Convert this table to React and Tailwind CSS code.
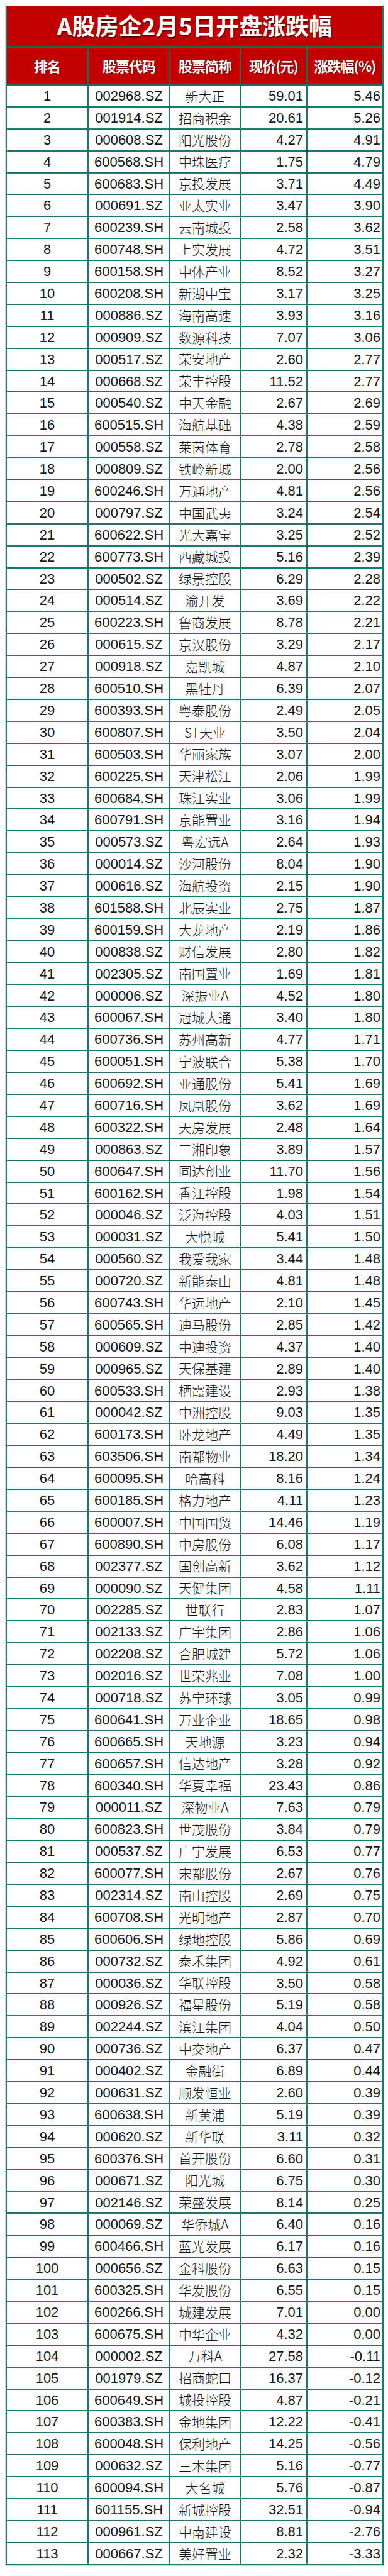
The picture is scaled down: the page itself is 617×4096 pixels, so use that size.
import React from "react";

const RAW = `1|002968.SZ|新大正|59.01|5.46
2|001914.SZ|招商积余|20.61|5.26
3|000608.SZ|阳光股份|4.27|4.91
4|600568.SH|中珠医疗|1.75|4.79
5|600683.SH|京投发展|3.71|4.49
6|000691.SZ|亚太实业|3.47|3.90
7|600239.SH|云南城投|2.58|3.62
8|600748.SH|上实发展|4.72|3.51
9|600158.SH|中体产业|8.52|3.27
10|600208.SH|新湖中宝|3.17|3.25
11|000886.SZ|海南高速|3.93|3.16
12|000909.SZ|数源科技|7.07|3.06
13|000517.SZ|荣安地产|2.60|2.77
14|000668.SZ|荣丰控股|11.52|2.77
15|000540.SZ|中天金融|2.67|2.69
16|600515.SH|海航基础|4.38|2.59
17|000558.SZ|莱茵体育|2.78|2.58
18|000809.SZ|铁岭新城|2.00|2.56
19|600246.SH|万通地产|4.81|2.56
20|000797.SZ|中国武夷|3.24|2.54
21|600622.SH|光大嘉宝|3.25|2.52
22|600773.SH|西藏城投|5.16|2.39
23|000502.SZ|绿景控股|6.29|2.28
24|000514.SZ|渝开发|3.69|2.22
25|600223.SH|鲁商发展|8.78|2.21
26|000615.SZ|京汉股份|3.29|2.17
27|000918.SZ|嘉凯城|4.87|2.10
28|600510.SH|黑牡丹|6.39|2.07
29|600393.SH|粤泰股份|2.49|2.05
30|600807.SH|ST天业|3.50|2.04
31|600503.SH|华丽家族|3.07|2.00
32|600225.SH|天津松江|2.06|1.99
33|600684.SH|珠江实业|3.06|1.99
34|600791.SH|京能置业|3.16|1.94
35|000573.SZ|粤宏远A|2.64|1.93
36|000014.SZ|沙河股份|8.04|1.90
37|000616.SZ|海航投资|2.15|1.90
38|601588.SH|北辰实业|2.75|1.87
39|600159.SH|大龙地产|2.19|1.86
40|000838.SZ|财信发展|2.80|1.82
41|002305.SZ|南国置业|1.69|1.81
42|000006.SZ|深振业A|4.52|1.80
43|600067.SH|冠城大通|3.40|1.80
44|600736.SH|苏州高新|4.77|1.71
45|600051.SH|宁波联合|5.38|1.70
46|600692.SH|亚通股份|5.41|1.69
47|600716.SH|凤凰股份|3.62|1.69
48|600322.SH|天房发展|2.48|1.64
49|000863.SZ|三湘印象|3.89|1.57
50|600647.SH|同达创业|11.70|1.56
51|600162.SH|香江控股|1.98|1.54
52|000046.SZ|泛海控股|4.03|1.51
53|000031.SZ|大悦城|5.41|1.50
54|000560.SZ|我爱我家|3.44|1.48
55|000720.SZ|新能泰山|4.81|1.48
56|600743.SH|华远地产|2.10|1.45
57|600565.SH|迪马股份|2.85|1.42
58|000609.SZ|中迪投资|4.37|1.40
59|000965.SZ|天保基建|2.89|1.40
60|600533.SH|栖霞建设|2.93|1.38
61|000042.SZ|中洲控股|9.03|1.35
62|600173.SH|卧龙地产|4.49|1.35
63|603506.SH|南都物业|18.20|1.34
64|600095.SH|哈高科|8.16|1.24
65|600185.SH|格力地产|4.11|1.23
66|600007.SH|中国国贸|14.46|1.19
67|600890.SH|中房股份|6.08|1.17
68|002377.SZ|国创高新|3.62|1.12
69|000090.SZ|天健集团|4.58|1.11
70|002285.SZ|世联行|2.83|1.07
71|002133.SZ|广宇集团|2.86|1.06
72|002208.SZ|合肥城建|5.72|1.06
73|002016.SZ|世荣兆业|7.08|1.00
74|000718.SZ|苏宁环球|3.05|0.99
75|600641.SH|万业企业|18.65|0.98
76|600665.SH|天地源|3.23|0.94
77|600657.SH|信达地产|3.28|0.92
78|600340.SH|华夏幸福|23.43|0.86
79|000011.SZ|深物业A|7.63|0.79
80|600823.SH|世茂股份|3.84|0.79
81|000537.SZ|广宇发展|6.53|0.77
82|600077.SH|宋都股份|2.67|0.76
83|002314.SZ|南山控股|2.69|0.75
84|600708.SH|光明地产|2.87|0.70
85|600606.SH|绿地控股|5.86|0.69
86|000732.SZ|泰禾集团|4.92|0.61
87|000036.SZ|华联控股|3.50|0.58
88|000926.SZ|福星股份|5.19|0.58
89|002244.SZ|滨江集团|4.04|0.50
90|000736.SZ|中交地产|6.37|0.47
91|000402.SZ|金融街|6.89|0.44
92|000631.SZ|顺发恒业|2.60|0.39
93|600638.SH|新黄浦|5.19|0.39
94|000620.SZ|新华联|3.11|0.32
95|600376.SH|首开股份|6.60|0.31
96|000671.SZ|阳光城|6.75|0.30
97|002146.SZ|荣盛发展|8.14|0.25
98|000069.SZ|华侨城A|6.40|0.16
99|600466.SH|蓝光发展|6.17|0.16
100|000656.SZ|金科股份|6.63|0.15
101|600325.SH|华发股份|6.55|0.15
102|600266.SH|城建发展|7.01|0.00
103|600675.SH|中华企业|4.32|0.00
104|000002.SZ|万科A|27.58|-0.11
105|001979.SZ|招商蛇口|16.37|-0.12
106|600649.SH|城投控股|4.87|-0.21
107|600383.SH|金地集团|12.22|-0.41
108|600048.SH|保利地产|14.25|-0.56
109|000632.SZ|三木集团|5.16|-0.77
110|600094.SH|大名城|5.76|-0.87
111|601155.SH|新城控股|32.51|-0.94
112|000961.SZ|中南建设|8.81|-2.76
113|000667.SZ|美好置业|2.32|-3.33`;

const ROWS = RAW.split("\n").map((l) => l.split("|"));

const GRID = "grid grid-cols-[130px_130px_112px_106px_119px]";
const NUM = "font-['Liberation_Sans','Noto_Sans_CJK_SC',sans-serif]";
const CJK = "font-['Noto_Sans_CJK_SC','Liberation_Sans',sans-serif]";

function Row({ r }) {
  const [rank, code, name, price, pct] = r;
  return (
    <div className={`${GRID} h-[34.9px] border-b-2 border-[#1c7a6d] bg-white text-[#151515]`}>
      <div className={`${NUM} flex items-center justify-center border-r-2 border-[#1c7a6d] text-[22px]`}>{rank}</div>
      <div className={`${NUM} flex items-center justify-center border-r-2 border-[#1c7a6d] text-[22px]`}>{code}</div>
      <div className={`${CJK} flex items-center justify-center border-r-2 border-[#1c7a6d] text-[21px] font-light`}>{name}</div>
      <div className={`${NUM} flex items-center justify-end border-r-2 border-[#1c7a6d] pr-[5px] text-[22px]`}>{price}</div>
      <div className={`${NUM} flex items-center justify-end pr-[3px] text-[22px]`}>{pct}</div>
    </div>
  );
}

export default function App() {
  const heads = ["排名", "股票代码", "股票简称", "现价(元)", "涨跌幅(%)"];
  return (
    <div className="w-[617px] bg-white pt-[6px] pl-[8px]">
      <div className="w-[603px] border border-[#d4d4d4] pt-[2px]">
        <div className="border-x-2 border-[#1c7a6d] border-t-0">
          <div className={`${CJK} flex h-[64px] items-center justify-center bg-[#c40000] text-[37px] font-bold text-white [text-shadow:1px_2px_2px_rgba(60,0,0,0.8)]`}>
            A股房企2月5日开盘涨跌幅
          </div>
          <div className={`${GRID} h-[63px] border-y-[3px] border-[#1c6b62] bg-[#c40000]`}>
            {heads.map((h, i) => (
              <div
                key={h}
                className={`${CJK} flex items-center justify-center text-[22px] font-bold tracking-[-1px] text-white [text-shadow:1px_1px_2px_rgba(60,0,0,0.8)] ${i < 4 ? "border-r-2 border-[#1c6b62]" : ""}`}
              >
                {h}
              </div>
            ))}
          </div>
          {ROWS.map((r) => (
            <Row key={r[0]} r={r} />
          ))}
        </div>
      </div>
    </div>
  );
}
